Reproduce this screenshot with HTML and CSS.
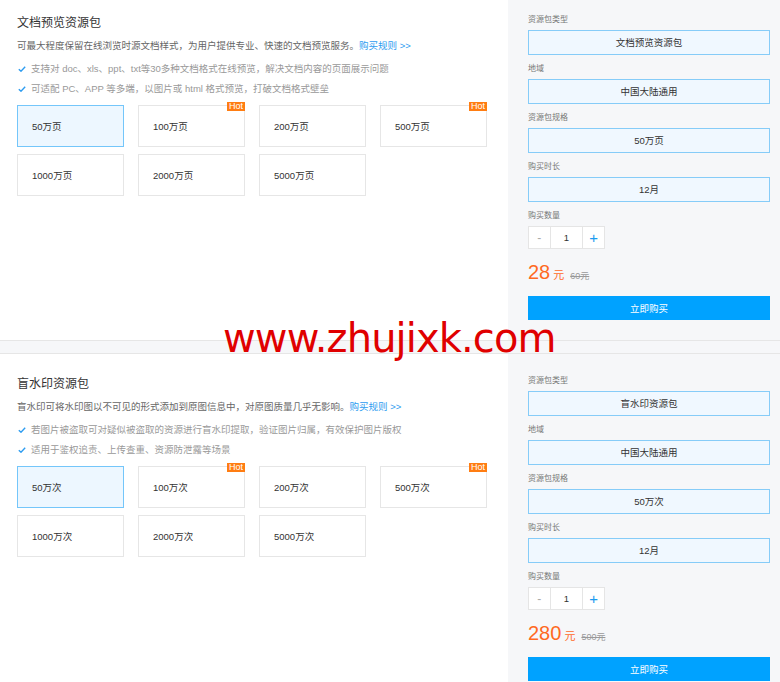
FILE: index.html
```html
<!DOCTYPE html>
<html lang="zh-CN">
<head>
    <meta charset="UTF-8">
    <meta name="viewport" content="width=device-width, initial-scale=1.0">
    <title>资源包购买</title>
    <link rel="stylesheet" href="styles.css">
</head>
<body>
    <div class="page">
        <!-- 文档预览资源包 -->
        <div class="pack pack-first">
            <div class="pack-main">
                <h2 class="pack-title">文档预览资源包</h2>
                <p class="pack-desc">可最大程度保留在线浏览时源文档样式，为用户提供专业、快速的文档预览服务。<a href="#">购买规则 &gt;&gt;</a></p>
                <ul class="features">
                    <li><svg class="check" width="8" height="6" viewBox="0 0 8 6"><path d="M0.8 3.2 L3 5.2 L7.2 0.8" fill="none" stroke="#2d9cf0" stroke-width="1.4"/></svg>支持对 doc、xls、ppt、txt等30多种文档格式在线预览，解决文档内容的页面展示问题</li>
                    <li><svg class="check" width="8" height="6" viewBox="0 0 8 6"><path d="M0.8 3.2 L3 5.2 L7.2 0.8" fill="none" stroke="#2d9cf0" stroke-width="1.4"/></svg>可适配 PC、APP 等多端，以图片或 html 格式预览，打破文档格式壁垒</li>
                </ul>
                <div class="specs">
                    <div class="spec active">50万页</div>
                    <div class="spec">100万页<span class="hot">Hot</span></div>
                    <div class="spec">200万页</div>
                    <div class="spec">500万页<span class="hot">Hot</span></div>
                    <div class="spec">1000万页</div>
                    <div class="spec">2000万页</div>
                    <div class="spec">5000万页</div>
                </div>
            </div>
            <div class="pack-side">
                <div class="field-label">资源包类型</div>
                <div class="field-box">文档预览资源包</div>
                <div class="field-label">地域</div>
                <div class="field-box">中国大陆通用</div>
                <div class="field-label">资源包规格</div>
                <div class="field-box">50万页</div>
                <div class="field-label">购买时长</div>
                <div class="field-box">12月</div>
                <div class="field-label">购买数量</div>
                <div class="stepper">
                    <span class="step-btn minus">-</span>
                    <span class="step-value">1</span>
                    <span class="step-btn plus">+</span>
                </div>
                <div class="price">
                    <span class="amount">28</span><span class="unit">元</span><span class="orig">60元</span>
                </div>
                <button class="buy-button">立即购买</button>
            </div>
        </div>

        <div class="divider"></div>

        <!-- 盲水印资源包 -->
        <div class="pack">
            <div class="pack-main">
                <h2 class="pack-title">盲水印资源包</h2>
                <p class="pack-desc">盲水印可将水印图以不可见的形式添加到原图信息中，对原图质量几乎无影响。<a href="#">购买规则 &gt;&gt;</a></p>
                <ul class="features">
                    <li><svg class="check" width="8" height="6" viewBox="0 0 8 6"><path d="M0.8 3.2 L3 5.2 L7.2 0.8" fill="none" stroke="#2d9cf0" stroke-width="1.4"/></svg>若图片被盗取可对疑似被盗取的资源进行盲水印提取，验证图片归属，有效保护图片版权</li>
                    <li><svg class="check" width="8" height="6" viewBox="0 0 8 6"><path d="M0.8 3.2 L3 5.2 L7.2 0.8" fill="none" stroke="#2d9cf0" stroke-width="1.4"/></svg>适用于鉴权追责、上传查重、资源防泄露等场景</li>
                </ul>
                <div class="specs">
                    <div class="spec active">50万次</div>
                    <div class="spec">100万次<span class="hot">Hot</span></div>
                    <div class="spec">200万次</div>
                    <div class="spec">500万次<span class="hot">Hot</span></div>
                    <div class="spec">1000万次</div>
                    <div class="spec">2000万次</div>
                    <div class="spec">5000万次</div>
                </div>
            </div>
            <div class="pack-side">
                <div class="field-label">资源包类型</div>
                <div class="field-box">盲水印资源包</div>
                <div class="field-label">地域</div>
                <div class="field-box">中国大陆通用</div>
                <div class="field-label">资源包规格</div>
                <div class="field-box">50万次</div>
                <div class="field-label">购买时长</div>
                <div class="field-box">12月</div>
                <div class="field-label">购买数量</div>
                <div class="stepper">
                    <span class="step-btn minus">-</span>
                    <span class="step-value">1</span>
                    <span class="step-btn plus">+</span>
                </div>
                <div class="price">
                    <span class="amount">280</span><span class="unit">元</span><span class="orig">500元</span>
                </div>
                <button class="buy-button">立即购买</button>
            </div>
        </div>

        <div class="watermark">www.zhujixk.com</div>
    </div>
</body>
</html>
```

FILE: styles.css
```css
html, body {
    overflow: hidden;
}

body {
    margin: 0;
    background: #fff;
    color: #333;
    font-family: "Liberation Sans", "Noto Sans CJK SC", sans-serif;
}

.page {
    position: relative;
    width: 780px;
}

.pack {
    display: flex;
}

.pack-first {
    margin-top: -7px;
}

.pack-main {
    flex: 1;
    padding: 20px 0 0 17px;
}

.pack-title {
    height: 20px;
    margin: 0;
    font-size: 12px;
    font-weight: normal;
    line-height: 20px;
    color: #333;
}

.pack-desc {
    height: 18px;
    margin: 4px 0 0;
    font-size: 9.5px;
    line-height: 18px;
    color: #666;
}

.pack-desc a {
    color: #2d9cf0;
    text-decoration: none;
}

.features {
    margin: 4px 0 0;
    padding: 0;
    list-style: none;
}

.features li {
    height: 20px;
    font-size: 9.5px;
    line-height: 20px;
    color: #999;
}

.check {
    margin: 0 5px 0 1px;
    vertical-align: 0;
}

.specs {
    display: grid;
    grid-template-columns: repeat(4, 107px);
    gap: 7px 14px;
    margin-top: 6px;
}

.spec {
    position: relative;
    display: flex;
    align-items: center;
    height: 42px;
    padding-left: 14px;
    box-sizing: border-box;
    border: 1px solid #e6e6e6;
    background: #fff;
    font-size: 9.5px;
    color: #333;
}

.spec.active {
    border-color: #74c6fa;
    background: #edf7ff;
}

.hot {
    position: absolute;
    top: -4px;
    right: -1px;
    width: 18px;
    height: 9px;
    background: #ff7d12;
    color: #fff;
    font-size: 9px;
    line-height: 9px;
    text-align: center;
}

.pack-side {
    width: 272px;
    box-sizing: border-box;
    padding: 20px 10px 20px 20px;
    background: #f6f7f9;
}

.field-label {
    height: 14px;
    margin-bottom: 3px;
    font-size: 8px;
    line-height: 14px;
    color: #777;
}

.field-box {
    height: 25px;
    margin-bottom: 7px;
    box-sizing: border-box;
    border: 1px solid #86ccf8;
    background: #f0f8ff;
    font-size: 9.5px;
    line-height: 23px;
    text-align: center;
    color: #333;
}

.stepper {
    display: flex;
    width: 77px;
    height: 23px;
    box-sizing: border-box;
    border: 1px solid #e5e5e5;
    background: #fff;
}

.step-btn,
.step-value {
    display: flex;
    align-items: center;
    justify-content: center;
}

.step-btn {
    width: 21px;
    font-size: 12px;
}

.minus {
    color: #aaa;
}

.plus {
    color: #1a9bf0;
    font-size: 15px;
}

.step-value {
    width: 32px;
    border-left: 1px solid #e5e5e5;
    border-right: 1px solid #e5e5e5;
    font-size: 9.5px;
    color: #333;
}

.price {
    height: 24px;
    margin-top: 11px;
    line-height: 24px;
    color: #ff6a1f;
}

.amount {
    font-size: 20px;
}

.unit {
    margin-left: 3px;
    font-size: 11px;
}

.orig {
    margin-left: 6px;
    font-size: 9px;
    color: #999;
    text-decoration: line-through;
}

.buy-button {
    display: block;
    width: 100%;
    height: 24px;
    margin-top: 12px;
    border: none;
    background: #00a2ff;
    color: #fff;
    font-family: inherit;
    font-size: 9.5px;
    cursor: pointer;
}

.divider {
    height: 14px;
    box-sizing: border-box;
    border-top: 1px solid #e6e6e6;
    border-bottom: 1px solid #e6e6e6;
    background: #f6f7f9;
}

.watermark {
    position: absolute;
    left: 223px;
    top: 325px;
    font-family: "DejaVu Sans", sans-serif;
    font-size: 40px;
    line-height: 40px;
    letter-spacing: -0.9px;
    color: #e00000;
}
```
